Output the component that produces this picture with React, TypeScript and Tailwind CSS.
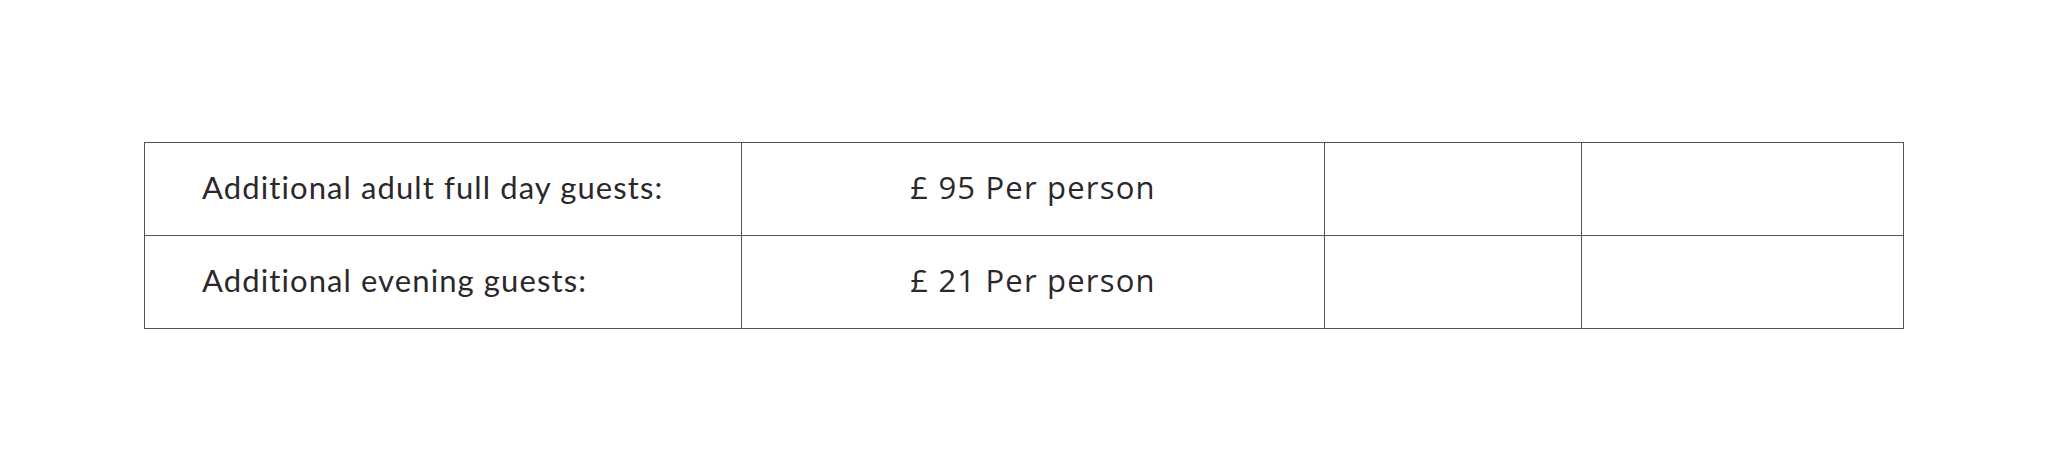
export default function App() {
  const rows = [
    { label: 'Additional adult full day guests:', price: '£ 95 Per person' },
    { label: 'Additional evening guests:', price: '£ 21 Per person' },
  ];

  return (
    <div className="min-h-[472px] bg-white px-[144px] pt-[142px]">
      <table className="w-full border-collapse border border-[#5e4c5e] text-[#2b282b]">
        <tbody>
          {rows.map((row) => (
            <tr key={row.label} className="h-[93px]">
              <td
                className="w-[597px] border border-[#5e4c5e] pb-[4px] pl-[57px] text-[31px] tracking-[1.1px]"
                style={{ fontFamily: 'Lato, "Open Sans", sans-serif' }}
              >
                {row.label}
              </td>
              <td
                className="w-[583px] border border-[#5e4c5e] pb-[4px] text-center text-[31px] tracking-[1.2px]"
                style={{ fontFamily: '"Open Sans", "DejaVu Sans", sans-serif' }}
              >
                {row.price}
              </td>
              <td className="w-[257px] border border-[#5e4c5e]"></td>
              <td className="border border-[#5e4c5e]"></td>
            </tr>
          ))}
        </tbody>
      </table>
    </div>
  );
}
